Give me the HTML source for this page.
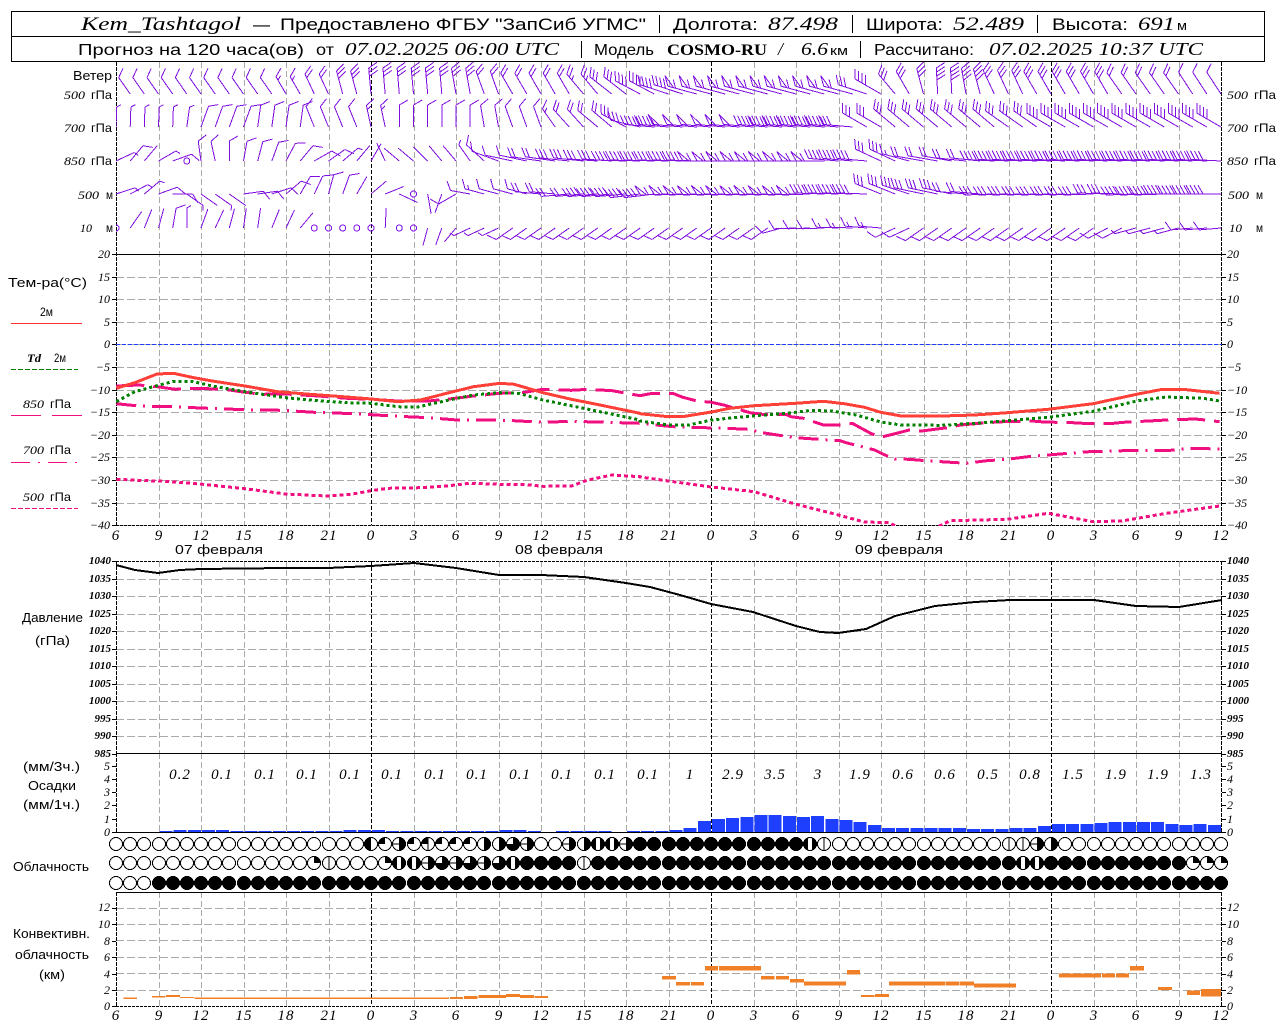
<!DOCTYPE html>
<html lang="ru"><head><meta charset="utf-8"><title>Kem_Tashtagol</title>
<style>
html,body{margin:0;padding:0;background:#fff;width:1280px;height:1024px;overflow:hidden}
svg{display:block}
text{fill:#000;font-family:"Liberation Sans","Noto Sans CJK SC",sans-serif;text-rendering:optimizeSpeed}
.i{font-family:"Liberation Serif",serif;font-style:italic}
.t{font-size:17px}.s{font-size:16px}
.i.t{font-size:19px}.i.s{font-size:18px}
.l{font-size:13px}.m{font-size:12px}
.n text{font-family:"Liberation Serif",serif;font-style:italic;font-size:12px;dominant-baseline:central}
.p text{font-family:"Liberation Serif",serif;font-style:italic;font-size:11px;dominant-baseline:central;font-weight:bold}
.x text{font-family:"Liberation Serif",serif;font-style:italic;font-size:15px;text-anchor:middle;letter-spacing:1px}
.v text{font-family:"Liberation Serif",serif;font-style:italic;font-size:15px;text-anchor:middle;letter-spacing:1px}
</style></head><body>
<svg id="c" xmlns="http://www.w3.org/2000/svg" width="1280" height="1024" viewBox="0 0 1280 1024">
<defs><clipPath id="pc"><rect x="116" y="62" width="1120" height="464"/></clipPath></defs>
<g id="g"></g>
<rect x="11.5" y="11.5" width="1253" height="50" fill="none" stroke="#000" shape-rendering="crispEdges"/>
<line x1="11" y1="36.5" x2="1265" y2="36.5" stroke="#000" shape-rendering="crispEdges"/>

<text class="i t" x="81" y="30" textLength="160">Kem_Tashtagol</text>
<text class="t" x="253" y="30">—</text>
<text class="t" x="280" y="30" textLength="366">Предоставлено ФГБУ "ЗапСиб УГМС"</text>
<text class="t" x="673" y="30" textLength="85">Долгота:</text>
<text class="i t" x="768" y="30" textLength="70">87.498</text>
<text class="t" x="866" y="30" textLength="77">Широта:</text>
<text class="i t" x="953" y="30" textLength="71">52.489</text>
<text class="t" x="1052" y="30" textLength="76">Высота:</text>
<text class="i t" x="1138" y="30" textLength="37">691</text>
<text class="l" x="1177" y="30" textLength="10">м</text>
<path d="M659.5 15V33M852.5 15V33M1037.5 15V33M581.5 41V58M860.5 41V58" stroke="#000" shape-rendering="crispEdges"/>

<text class="s" x="78" y="55" textLength="226">Прогноз на 120 часа(ов)</text>
<text class="s" x="316" y="55" textLength="18">от</text>
<text class="i s" x="345" y="55" textLength="214">07.02.2025 06:00 UTC</text>
<text class="s" x="594" y="55" textLength="60">Модель</text>
<text class="s" x="667" y="55" textLength="100" style="font-family:'Liberation Serif',serif;font-weight:bold">COSMO-RU</text>
<text class="i s" x="778" y="55">/</text>
<text class="i s" x="801" y="55" textLength="27">6.6</text>
<text class="l" x="830" y="55" textLength="18">км</text>
<text class="s" x="874" y="55" textLength="100">Рассчитано:</text>
<text class="i s" x="989" y="55" textLength="214">07.02.2025 10:37 UTC</text>

<!-- wind labels -->
<text class="l" x="73" y="80" textLength="39">Ветер</text>
<g class="m">
<text class="i" x="64" y="99" textLength="21">500</text><text x="91" y="99" textLength="21">гПа</text>
<text class="i" x="64" y="132" textLength="21">700</text><text x="91" y="132" textLength="21">гПа</text>
<text class="i" x="64" y="165" textLength="21">850</text><text x="91" y="165" textLength="21">гПа</text>
<text class="i" x="78" y="199" textLength="21">500</text><text x="106" y="199" textLength="7">м</text>
<text class="i" x="80" y="232" textLength="12">10</text><text x="106" y="232" textLength="7">м</text>
<text class="i" x="1227" y="99" textLength="21">500</text><text x="1254" y="99" textLength="22">гПа</text>
<text class="i" x="1227" y="132" textLength="21">700</text><text x="1254" y="132" textLength="22">гПа</text>
<text class="i" x="1227" y="165" textLength="21">850</text><text x="1254" y="165" textLength="22">гПа</text>
<text class="i" x="1228" y="199" textLength="21">500</text><text x="1256" y="199" textLength="7">м</text>
<text class="i" x="1229" y="232" textLength="13">10</text><text x="1256" y="232" textLength="7">м</text>
</g>

<!-- temperature legend -->
<text class="l" x="8" y="287" textLength="79">Тем-ра(°C)</text>
<text class="m" x="40" y="316" textLength="13">2м</text>
<text class="m i" x="27" y="362" textLength="14" font-weight="bold">Td</text><text class="m" x="54" y="362" textLength="12">2м</text>
<text class="m i" x="23" y="408" textLength="21">850</text><text class="m" x="50" y="408" textLength="21">гПа</text>
<text class="m i" x="23" y="454" textLength="21">700</text><text class="m" x="50" y="454" textLength="21">гПа</text>
<text class="m i" x="23" y="501" textLength="21">500</text><text class="m" x="50" y="501" textLength="21">гПа</text>
<g shape-rendering="crispEdges" fill="none">
<path d="M11 323.5H82" stroke="#ff3030"/>
<path d="M11 369.5H78" stroke="#008000" stroke-dasharray="5 2"/>
<path d="M11 415.5H41M52 415.5H82" stroke="#f00f80"/>
<path d="M11 462.5H30M38 462.5H40M48 462.5H67M75 462.5H77" stroke="#f00f80"/>
<path d="M11 508.5H78" stroke="#f00f80" stroke-dasharray="5 2"/>
</g>

<!-- other left labels -->
<text class="l" x="22" y="622" textLength="61">Давление</text>
<text class="l" x="35" y="645" textLength="35">(гПа)</text>
<text class="l" x="23" y="771" textLength="57">(мм/3ч.)</text>
<text class="l" x="28" y="790" textLength="48">Осадки</text>
<text class="l" x="23" y="809" textLength="57">(мм/1ч.)</text>
<text class="l" x="13" y="871" textLength="76">Облачность</text>
<text class="l" x="13" y="938" textLength="77">Конвективн.</text>
<text class="l" x="15" y="959" textLength="74">облачность</text>
<text class="l" x="39" y="979" textLength="26">(км)</text>

<!-- temp axis -->
<g class="n" text-anchor="end">
<text x="110" y="254">20</text><text x="110" y="277">15</text><text x="110" y="299">10</text><text x="110" y="322">5</text><text x="110" y="344">0</text><text x="110" y="367">−5</text><text x="110" y="390">−10</text><text x="110" y="412">−15</text><text x="110" y="435">−20</text><text x="110" y="457">−25</text><text x="110" y="480">−30</text><text x="110" y="503">−35</text><text x="110" y="525">−40</text>
</g>
<g class="n">
<text x="1227" y="254">20</text><text x="1227" y="277">15</text><text x="1227" y="299">10</text><text x="1227" y="322">5</text><text x="1227" y="344">0</text><text x="1227" y="367">−5</text><text x="1227" y="390">−10</text><text x="1227" y="412">−15</text><text x="1227" y="435">−20</text><text x="1227" y="457">−25</text><text x="1227" y="480">−30</text><text x="1227" y="503">−35</text><text x="1227" y="525">−40</text>
</g>
<g class="x">
<text x="116" y="540">6</text><text x="159" y="540">9</text><text x="201" y="540">12</text><text x="244" y="540">15</text><text x="286" y="540">18</text><text x="329" y="540">21</text><text x="371" y="540">0</text><text x="414" y="540">3</text><text x="456" y="540">6</text><text x="499" y="540">9</text><text x="541" y="540">12</text><text x="584" y="540">15</text><text x="626" y="540">18</text><text x="669" y="540">21</text><text x="711" y="540">0</text><text x="754" y="540">3</text><text x="796" y="540">6</text><text x="839" y="540">9</text><text x="881" y="540">12</text><text x="924" y="540">15</text><text x="966" y="540">18</text><text x="1009" y="540">21</text><text x="1051" y="540">0</text><text x="1094" y="540">3</text><text x="1136" y="540">6</text><text x="1179" y="540">9</text><text x="1221" y="540">12</text>
</g>
<text class="l" x="175" y="554" textLength="88">07 февраля</text>
<text class="l" x="515" y="554" textLength="88">08 февраля</text>
<text class="l" x="855" y="554" textLength="88">09 февраля</text>

<!-- pressure axis -->
<g class="p" text-anchor="end">
<text x="111" y="561">1040</text><text x="111" y="579">1035</text><text x="111" y="596">1030</text><text x="111" y="614">1025</text><text x="111" y="631">1020</text><text x="111" y="649">1015</text><text x="111" y="666">1010</text><text x="111" y="684">1005</text><text x="111" y="701">1000</text><text x="111" y="719">995</text><text x="111" y="736">990</text><text x="111" y="754">985</text>
</g>
<g class="p">
<text x="1227" y="561">1040</text><text x="1227" y="579">1035</text><text x="1227" y="596">1030</text><text x="1227" y="614">1025</text><text x="1227" y="631">1020</text><text x="1227" y="649">1015</text><text x="1227" y="666">1010</text><text x="1227" y="684">1005</text><text x="1227" y="701">1000</text><text x="1227" y="719">995</text><text x="1227" y="736">990</text><text x="1227" y="754">985</text>
</g>

<!-- precip axis -->
<g class="n" text-anchor="end">
<text x="110" y="766">5</text><text x="110" y="779">4</text><text x="110" y="792">3</text><text x="110" y="805">2</text><text x="110" y="819">1</text><text x="110" y="832">0</text>
</g>
<g class="n">
<text x="1227" y="766">5</text><text x="1227" y="779">4</text><text x="1227" y="792">3</text><text x="1227" y="805">2</text><text x="1227" y="819">1</text><text x="1227" y="832">0</text>
</g>
<g class="v">
<text x="180" y="779">0.2</text><text x="222" y="779">0.1</text><text x="265" y="779">0.1</text><text x="307" y="779">0.1</text><text x="350" y="779">0.1</text><text x="392" y="779">0.1</text><text x="435" y="779">0.1</text><text x="477" y="779">0.1</text><text x="520" y="779">0.1</text><text x="562" y="779">0.1</text><text x="605" y="779">0.1</text><text x="648" y="779">0.1</text><text x="690" y="779">1</text><text x="733" y="779">2.9</text><text x="775" y="779">3.5</text><text x="818" y="779">3</text><text x="860" y="779">1.9</text><text x="903" y="779">0.6</text><text x="945" y="779">0.6</text><text x="988" y="779">0.5</text><text x="1030" y="779">0.8</text><text x="1073" y="779">1.5</text><text x="1116" y="779">1.9</text><text x="1158" y="779">1.9</text><text x="1201" y="779">1.3</text>
</g>

<!-- convective axis -->
<g class="n" text-anchor="end">
<text x="110" y="907">12</text><text x="110" y="924">10</text><text x="110" y="941">8</text><text x="110" y="957">6</text><text x="110" y="974">4</text><text x="110" y="990">2</text><text x="110" y="1006">0</text>
</g>
<g class="n">
<text x="1227" y="907">12</text><text x="1227" y="924">10</text><text x="1227" y="941">8</text><text x="1227" y="957">6</text><text x="1227" y="974">4</text><text x="1227" y="990">2</text><text x="1227" y="1006">0</text>
</g>
<g class="x">
<text x="116" y="1020">6</text><text x="159" y="1020">9</text><text x="201" y="1020">12</text><text x="244" y="1020">15</text><text x="286" y="1020">18</text><text x="329" y="1020">21</text><text x="371" y="1020">0</text><text x="414" y="1020">3</text><text x="456" y="1020">6</text><text x="499" y="1020">9</text><text x="541" y="1020">12</text><text x="584" y="1020">15</text><text x="626" y="1020">18</text><text x="669" y="1020">21</text><text x="711" y="1020">0</text><text x="754" y="1020">3</text><text x="796" y="1020">6</text><text x="839" y="1020">9</text><text x="881" y="1020">12</text><text x="924" y="1020">15</text><text x="966" y="1020">18</text><text x="1009" y="1020">21</text><text x="1051" y="1020">0</text><text x="1094" y="1020">3</text><text x="1136" y="1020">6</text><text x="1179" y="1020">9</text><text x="1221" y="1020">12</text>
</g>
</svg>
<script>
(function(){
document.querySelectorAll('text[textLength]').forEach(function(t){t.setAttribute('lengthAdjust','spacingAndGlyphs')});
var g=document.getElementById('g'),NS='http://www.w3.org/2000/svg';
function el(n,a,p){var e=document.createElementNS(NS,n);for(var k in a)e.setAttribute(k,a[k]);(p||g).appendChild(e);return e}
function path(d,a){a=a||{};a.d=d;a.fill=a.fill||'none';a['shape-rendering']='crispEdges';return el('path',a)}
var X0=116,X1=1222,DX=42.5,D1=DX/3;
function xi(i){return X0+i*D1}
/* horizontal dashed grid */
var h='',i,j;
function hg(y0,st,n){for(var k=0;k<n;k++){var y=Math.round(y0+k*st)+.5;h+='M116 '+y+'H1222'}}
hg(276.6,22.6,12);hg(578.5,17.5,10);hg(907.5,16.4,6);
path(h,{stroke:'#aaa','stroke-dasharray':'8 3'});
/* vertical grid */
var v='',b='';
var seg=[[62,525],[561,753],[753,832],[892,1006]];
for(i=0;i<=26;i++){var x=Math.round(X0+i*DX)+.5;
 for(j=0;j<seg.length;j++){var s='M'+x+' '+seg[j][0]+'V'+seg[j][1];
  if(i==6||i==14||i==22)b+=s; else if(i!=0&&i!=26)v+=s;}
}
path(v,{stroke:'#aaa','stroke-dasharray':'6 3'});
path(b,{stroke:'#000','stroke-dasharray':'4 2'});
/* axes */
var ax='';
for(j=0;j<seg.length;j++){ax+='M116.5 '+seg[j][0]+'V'+seg[j][1]+'M1221.5 '+seg[j][0]+'V'+seg[j][1];}
path(ax,{stroke:'#000','stroke-dasharray':'4 1'});
var t='';
function tk(list){list.forEach(function(y){y=Math.round(y)+.5;t+='M112 '+y+'H116M1222 '+y+'H1226'})}
var tl=[];for(i=0;i<13;i++)tl.push(254+i*22.6);tk(tl);
tl=[];for(i=0;i<12;i++)tl.push(561+i*17.5);tk(tl);
tk([766,779,792,805,819,832]);tk([907.5,924,941,957,973.5,990,1006]);
path(t,{stroke:'#000'});
path('M116 254.5H1222M116 753.5H1222M116 832.5H1222M116 892.5H1222',{stroke:'#000'});
path('M116 525.5H1222M116 561.5H1222M116 1006.5H1222',{stroke:'#000','stroke-dasharray':'3 1'});
path('M116 344.5H1222',{stroke:'#1f3fff','stroke-dasharray':'4 2'});

/* wind barbs */
function rad(d){return d*Math.PI/180}
function f(n){return Math.round(n*10)/10}
function barb(x,y,th,n,L){
 var ux=Math.sin(rad(th)),uy=-Math.cos(rad(th)),fx=Math.sin(rad(th+60)),fy=-Math.cos(rad(th+60));
 var d='M'+f(x)+' '+f(y)+'L'+f(x+L*ux)+' '+f(y+L*uy),pos=L;
 function pt(p){return [x+p*ux,y+p*uy]}
 if(n==7||n==8){var a=pt(pos),c=pt(pos-6);
  d+='M'+f(a[0])+' '+f(a[1])+'L'+f(a[0]+fx*11)+' '+f(a[1]+fy*11)+'L'+f(c[0])+' '+f(c[1]);pos-=8;
  if(n==7){a=pt(pos);d+='M'+f(a[0])+' '+f(a[1])+'l'+f(fx*9)+' '+f(fy*9)}
  return d}
 var full=Math.floor(n),half=n-full;
 for(var k=0;k<full;k++){var q=pt(pos);d+='M'+f(q[0])+' '+f(q[1])+'l'+f(fx*10)+' '+f(fy*10);pos-=4}
 if(half){var q2=pt(pos);d+='M'+f(q2[0])+' '+f(q2[1])+'l'+f(fx*5)+' '+f(fy*5)}
 return d;
}
function row(y,spec){
 var d='',th=0,n=0,L=20,p=0;
 for(var k=0;k<=78;k++){
  while(p<spec.length&&spec[p][0]<=k){th=spec[p][1];n=spec[p][2];if(spec[p][3])L=spec[p][3];p++}
  if(n<0){var x=xi(k);d+='M'+f(x-3)+' '+y+'a3 3 0 1 0 6 0a3 3 0 1 0 -6 0'}
  else d+=barb(xi(k),y,th,n,L);
 }
 var e=path(d,{stroke:'#8010e0'});e.setAttribute('clip-path','url(#pc)');
}
row(94,[[0,-35,1,20],[12,-30,1.5],[14,-25,2,22],[16,-15,3,24],[18,-5,3,26],[24,-10,3,26],[26,-20,2,24],[28,-30,2,24],[33,-40,2.5,26],[35,-52,3,28],[37,-62,4,28],[39,-72,4,30],[41,-75,7,30],[53,-72,3],[54,-60,4],[55,-40,3,26],[56,-30,3],[57,-15,3,26],[58,-3,4,26],[60,-10,4],[61,-15,4],[62,-25,3],[65,-30,3],[71,-35,2],[76,-33,1]]);
row(127,[[0,2,.5,20],[5,8,.5,20],[6,20,1,22],[10,8,1,22],[14,-22,1,22],[18,-12,1.5],[20,0,1,22],[26,-10,1,22],[28,-20,1],[31,-35,1.5],[32,-42,2,24],[34,-50,2,26],[36,-62,3,28],[37,-77,3,30],[38,-85,5,30],[40,-85,8,30],[46,-85,5],[52,-85,3,30],[53,-60,3,28],[55,-50,3,28],[63,-55,3,28],[66,-60,4]]);
row(161,[[0,65,.5,20],[1,40,1],[2,40,0],[3,60,.5],[4,70,1],[5,0,-1],[6,-8,1,20],[7,-12,1],[8,0,1],[9,10,1],[10,15,1],[11,20,1],[12,28,1],[13,40,1],[14,60,1],[15,55,1],[16,50,.5],[17,40,0],[18,30,0],[19,-25,0],[20,-50,0],[22,-45,0],[23,-40,0],[25,-35,.5],[26,-48,1,24],[27,-70,1,28],[28,-78,1,28],[30,-82,2,30],[32,-84,3,30],[34,-86,3],[36,-88,4],[42,-90,7,28],[51,-85,4,30],[54,-65,3,28],[56,-75,1.5],[57,-80,2,30],[60,-84,2],[62,-87,4]]);
row(194,[[0,72,.5,20],[1,62,.5],[2,50,.5],[3,70,1],[4,90,1,20],[5,125,.5],[6,125,0],[7,125,.5],[8,125,0],[9,82,1],[11,72,1],[12,50,1],[13,30,1],[14,25,1],[15,15,1],[16,20,1],[17,30,0],[18,50,0],[19,68,0],[20,115,0],[21,0,-1],[22,170,0],[23,200,0],[24,-120,1],[25,-80,1,20],[26,-75,1.5],[27,-75,1],[30,-85,2,26],[32,-95,2,28],[34,-95,4,30],[37,-97,4,30],[39,-92,7,28],[50,-88,4,30],[54,-68,3,28],[56,-72,3],[57,-78,3,30],[60,-85,2],[62,-92,3],[70,-88,3],[72,-92,4],[75,-90,4]]);
row(228,[[0,0,-1],[1,35,0,20],[2,22,0],[3,15,0],[4,10,1],[5,0,.5],[6,20,0],[7,25,0],[8,15,0],[9,8,0],[11,22,0],[12,25,0],[13,40,0],[14,0,-1],[19,3,0],[20,0,-1],[22,195,0,18],[23,200,0],[24,220,0],[25,-115,.5,18],[28,-125,1,20],[47,-105,1,20],[48,-92,1,22],[51,-88,1.5],[53,-85,1.5],[55,-115,1],[57,-125,1],[70,-118,1],[72,-105,.5],[76,-95,1]]);

/* curves: points read as (zx,zy) in crop coordinates */
function P(a,ox,oy){var o=[];for(var k=0;k<a.length;k+=2)o.push(f(ox+a[k]/2.45)+','+f(oy+a[k+1]/3));return o}
function curve(a1,a2,c,w,dash,clip){
 var pts=P(a1,0,250).concat(P(a2,640,250));
 var a={points:pts.join(' '),fill:'none',stroke:c,'stroke-width':w,'stroke-linejoin':'round','shape-rendering':'crispEdges'};
 if(dash)a['stroke-dasharray']=dash;
 a['clip-path']='url(#pc)';
 el('polyline',a);
}
var PK='#f00f80';
curve([285,688,340,691,400,694,490,702,600,716,700,732,800,738,860,733,910,722,950,715,1030,713,1100,707,1150,700,1220,703,1290,704,1330,709,1400,708,1440,690,1500,675,1568,680],
 [0,681,70,693,175,711,280,725,380,762,470,790,550,816,610,818,640,836,720,836,760,812,900,808,1000,790,1110,815,1180,813,1290,790,1420,768],PK,3,'4 3');
curve([285,461,340,468,420,470,510,475,600,479,690,481,770,487,870,491,910,494,960,498,1050,503,1120,510,1240,511,1330,517,1400,514,1568,520],
 [0,520,80,530,125,532,210,535,265,538,300,548,380,563,490,572,510,580,540,589,575,600,600,615,625,627,660,628,700,632,750,636,800,640,850,632,900,628,950,620,1020,613,1100,605,1220,601,1300,601,1350,595,1420,597],PK,3,'20 7 2 7');
curve([285,408,340,405,385,410,430,418,480,415,550,418,590,425,640,433,700,432,780,438,850,445,910,448,975,453,1050,453,1100,447,1160,438,1225,430,1280,428,1330,418,1400,421,1440,418,1500,422,1545,432],
 [0,437,30,430,80,430,105,442,140,453,175,457,205,465,270,488,300,493,360,494,370,500,400,505,450,525,470,525,500,525,520,520,565,550,590,562,660,540,690,543,760,532,785,525,850,518,890,515,960,513,990,516,1060,518,1085,520,1160,520,1185,517,1260,512,1290,510,1360,507,1385,510,1420,515],PK,3,'28 9');
curve([285,455,330,425,385,407,425,394,470,394,520,408,600,425,700,443,780,452,850,458,910,460,975,470,1020,472,1100,450,1160,435,1225,428,1270,430,1330,450,1430,475,1568,510],
 [0,513,70,525,120,525,175,510,280,497,360,490,420,481,470,483,530,495,590,516,640,525,740,526,820,520,900,512,1000,502,1110,484,1220,452,1290,441,1380,445,1420,453],'#008000',3,'3 3');
curve([285,415,330,398,385,372,425,370,470,382,520,393,600,408,680,425,760,433,850,441,910,447,975,455,1030,450,1100,428,1160,410,1225,400,1260,403,1330,428,1400,448,1470,465,1568,490],
 [0,491,60,499,110,499,175,486,220,475,280,467,380,460,450,454,500,461,550,472,590,487,640,498,740,498,820,495,900,488,1000,478,1110,461,1220,432,1280,418,1330,418,1420,430],'#ff4038',3);

/* pressure */
el('polyline',{points:'116,565 135,570 158,573 180,570 201,569 243,568.5 286,568 328,568 371,566 414,563 456,568 499,575 520,575 541,575 584,577 626,583 650,587 680,595 711,604 753,612 796,626 820,632 838,633 866,629 895,616 935,606 975,602 1010,600 1051,600 1094,600 1136,606 1179,607 1222,600',fill:'none',stroke:'#000','stroke-width':2,'shape-rendering':'crispEdges'});

/* precipitation bars */
function rect(x,y,w,h,c){el('rect',{x:x,y:y,width:w,height:h,fill:c,'shape-rendering':'crispEdges'})}
var low={3:1,4:2,5:2,6:2,7:2,8:1,9:1,10:1,11:1,12:1,13:1,14:1,15:1,16:2,17:2,18:2,19:1,20:1,21:1,22:1,23:1,24:1,25:1,26:1,27:2,28:2,29:1,31:1,32:1,33:1,34:1,36:1,37:1};
for(var k in low){rect(xi(+k)+1,832-low[k],13,low[k],'#1f3fff')}
var hs=[1,2,4,11,13,14,15,17,17,16,15,16,13,12,10,7,4,4,4,4,4,4,3,3,3,4,4,6,8,8,8,9,10,10,10,10,8,7,8,7];
for(i=0;i<hs.length;i++){rect(xi(38+i)+1,832-hs[i],13,hs[i],'#1f3fff')}

/* cloud circles */
var R1='..................'+'LaHawaaaRRcH..HRSSH'+'############'+'Sv'+'............'+'vvHR'+'............';
var R2='..............bv...'+'bSSHcHcHcS'+'####v'+'##############################'+'SS'+'##########'+'bbb';
var R3='...';for(i=0;i<76;i++)R3+='#';
function sec(cx,cy,r,a0,a1){var p=function(a){return f(cx+r*Math.sin(rad(a)))+' '+f(cy-r*Math.cos(rad(a)))};
 var lg=(a1-a0)>180?1:0;return 'M'+cx+' '+cy+'L'+p(a0)+'A'+r+' '+r+' 0 '+lg+' 1 '+p(a1)+'Z'}
function circ(cx,cy,s){
 var r=6.5,fill=s=='#'?'#000':'#fff';
 el('circle',{cx:cx,cy:cy,r:r,fill:fill,stroke:'#000','stroke-width':1,'shape-rendering':'crispEdges'});
 var d='',l='';
 if(s=='L')d=sec(cx,cy,r,180,360);
 if(s=='R'||s=='H')d=sec(cx,cy,r,0,180);
 if(s=='a'||s=='w')d=sec(cx,cy,r,270,360);
 if(s=='b')d=sec(cx,cy,r,0,90);
 if(s=='c')d=sec(cx,cy,r,0,270);
 if(s=='S')d=sec(cx,cy,r,0,180)+sec(cx,cy,r,180,360);
 if(d)el('path',{d:d,fill:'#000','shape-rendering':'crispEdges'});
 if(s=='S')el('rect',{x:cx-2,y:cy-7,width:4,height:14,fill:'#fff','shape-rendering':'crispEdges'});
 if(s=='S'){el('circle',{cx:cx,cy:cy,r:r,fill:'none',stroke:'#000','stroke-width':1,'shape-rendering':'crispEdges'})}
 if(s=='v'||s=='w')l='M'+Math.round(cx)+' '+(cy-r)+'V'+(cy+r);
 if(s=='H')l='M'+(cx-r)+' '+cy+'H'+(cx+r);
 if(s=='v'||s=='w'||s=='H')path(l,{stroke:'#000'});
}
[[844,R1],[863,R2],[883,R3]].forEach(function(o){for(var k=0;k<=78;k++)circ(Math.round(xi(k)),o[0],o[1].charAt(k)||'.')});

/* convective bars */
var O='#f08028';
function cb(a,ox){for(var k=0;k<a.length;k+=4){var x0=ox+a[k]/2.45,x1=ox+a[k+1]/2.45,y0=750+a[k+2]/3,y1=750+a[k+3]/3;rect(f(x0),f(y0),f(x1-x0),f(y1-y0),O)}}
cb([303,336,743,747,372,405,738,742,407,441,735,741,441,475,741,744,477,1100,743,747,1102,1134,741,747,1137,1170,738,747,1172,1240,735,744,1240,1274,732,741,1274,1308,735,744,1310,1343,738,744],0);
cb([54,88,678,689,88,122,696,707,125,157,696,707,159,191,648,662,193,296,648,662,296,330,678,689,333,365,678,689,367,402,687,698,402,505,695,707,507,539,660,674,541,574,735,741,576,610,732,741,610,748,695,707,750,783,695,707,784,818,695,707,818,921,701,713,1027,1130,671,683,1132,1164,671,683,1166,1198,671,683,1200,1235,648,662,1269,1303,711,720,1340,1372,722,735,1374,1424,717,740],640);
})();
</script>
</body></html>
